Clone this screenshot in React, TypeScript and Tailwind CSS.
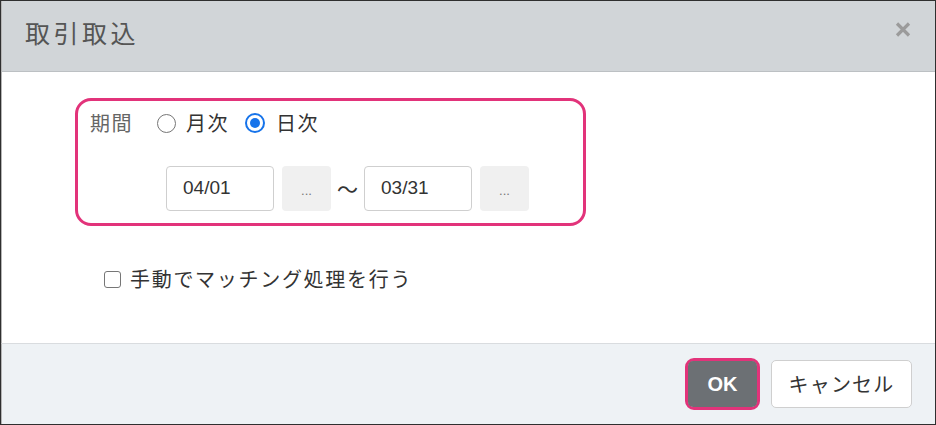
import React from "react";

const jp = { fontFamily: '"Noto Sans CJK JP", "Noto Sans", sans-serif' };
const latin = { fontFamily: '"Liberation Sans", "Noto Sans CJK JP", sans-serif' };

function Radio({ checked }: { checked?: boolean }) {
  if (checked) {
    return (
      <div className="w-[20px] h-[20px] rounded-full border-2 border-[#1673ea] flex items-center justify-center flex-shrink-0">
        <div className="w-[10px] h-[10px] rounded-full bg-[#1673ea]" />
      </div>
    );
  }
  return <div className="w-[19px] h-[19px] rounded-full border-[1.5px] border-[#767676] flex-shrink-0" />;
}

function DateField({ value }: { value: string }) {
  return (
    <div className="flex items-center gap-2">
      <div
        className="w-[108px] h-[45px] border border-[#cfcfcf] rounded-[4px] bg-white flex items-center pl-[16px] text-[19px] text-[#333]"
        style={latin}
      >
        {value}
      </div>
      <button
        className="w-[49px] h-[45px] rounded-[4px] bg-[#f0f0f0] text-[13px] text-[#777] flex items-center justify-center pt-[4px]"
        style={latin}
      >
        ...
      </button>
    </div>
  );
}

export default function App() {
  return (
    <div className="w-[936px] h-[425px] border border-[#2f2f2f] bg-white flex flex-col overflow-hidden">
      <div className="h-[71px] flex-shrink-0 bg-[#d1d5d8] border-b border-[#bcc0c3] border-l border-l-[#b5b5b5] flex items-start justify-between pl-[23px] pr-[24px]">
        <div className="pt-[19px] text-[25px] leading-none tracking-[3.5px] text-[#555]" style={jp}>
          取引取込
        </div>
        <svg width="16" height="15" viewBox="0 0 16 15" className="mt-[21px]">
          <path d="M2 1.5 L14 13.5 M14 1.5 L2 13.5" stroke="#9b9b9b" strokeWidth="3.2" />
        </svg>
      </div>

      <div className="flex-1 border-l border-[#b5b5b5]">
        <div className="ml-[73px] mt-[26px] w-[511px] h-[128px] border-[3.5px] border-[#e2337a] rounded-[16px] pl-[12px]">
          <div className="h-[44px] flex items-center text-[20px]" style={jp}>
            <span className="text-[#666] tracking-[1.5px]">期間</span>
            <div className="ml-[24px]">
              <Radio />
            </div>
            <span className="ml-[10px] text-[#333] tracking-[1.5px]">月次</span>
            <div className="ml-[16px]">
              <Radio checked />
            </div>
            <span className="ml-[11px] text-[#333] tracking-[1.5px]">日次</span>
          </div>
          <div className="mt-[21px] ml-[76px] flex items-center">
            <DateField value="04/01" />
            <span className="mx-[6px] text-[21px] text-[#333]" style={jp}>
              〜
            </span>
            <DateField value="03/31" />
          </div>
        </div>

        <div className="mt-[38px] ml-[102px] h-[30px] flex items-center">
          <div className="w-[17px] h-[17px] border-[1.5px] border-[#767676] rounded-[3px] bg-white" />
          <span className="ml-[9px] text-[20px] text-[#333] tracking-[1.7px]" style={jp}>
            手動でマッチング処理を行う
          </span>
        </div>
      </div>

      <div className="h-[81px] flex-shrink-0 bg-[#eef2f5] border-t border-[#d9dcdf] border-l border-l-[#b5b5b5] flex items-center justify-end pr-[23px] gap-[11px]">
        <div className="border-[3.5px] border-[#e2337a] rounded-[9px]">
          <button
            className="w-[69px] h-[46px] bg-[#6c7074] rounded-[5px] text-white font-bold text-[20px] flex items-center justify-center"
            style={latin}
          >
            OK
          </button>
        </div>
        <button
          className="w-[141px] h-[48px] bg-white border border-[#cfcfcf] rounded-[5px] text-[20px] text-[#333] tracking-[1.2px] flex items-center justify-center"
          style={jp}
        >
          キャンセル
        </button>
      </div>
    </div>
  );
}
